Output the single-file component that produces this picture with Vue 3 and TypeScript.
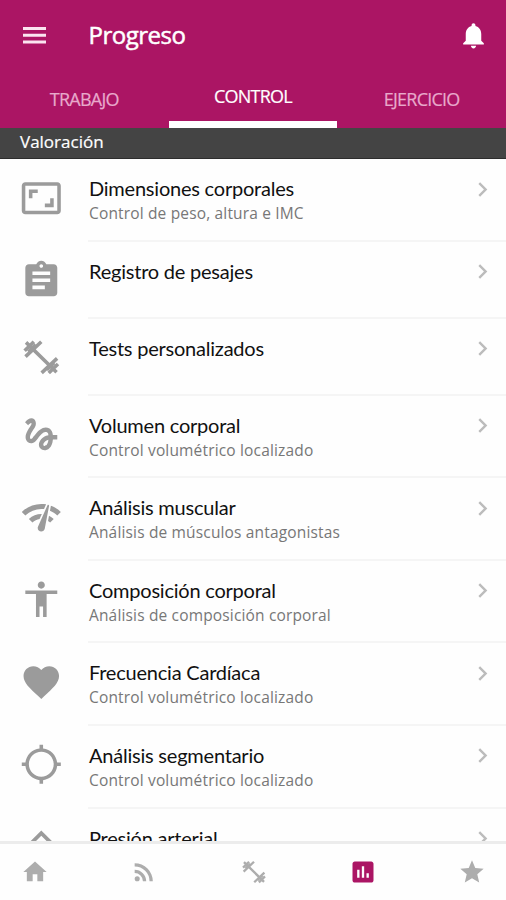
<script setup lang="ts">
interface Row {
  title: string
  sub?: string
  icon: string
}

const paths: Record<string, string> = {
  ratio: 'M19 12h-2v3h-3v2h5v-5zM7 9h3V7H5v5h2V9zm14-6H3c-1.1 0-2 .9-2 2v14c0 1.1.9 2 2 2h18c1.1 0 2-.9 2-2V5c0-1.1-.9-2-2-2zm0 16.01H3V4.99h18v14.02z',
  clipboard: 'M19 3h-4.18C14.4 1.84 13.3 1 12 1c-1.3 0-2.4.84-2.82 2H5c-1.1 0-2 .9-2 2v14c0 1.1.9 2 2 2h14c1.1 0 2-.9 2-2V5c0-1.1-.9-2-2-2zm-7 0c.55 0 1 .45 1 1s-.45 1-1 1-1-.45-1-1 .45-1 1-1zm2 14H7v-2h7v2zm3-4H7v-2h10v2zm0-4H7V7h10v2z',
  gesture: 'M4.59 6.89c.7-.71 1.4-1.35 1.71-1.22.5.2 0 1.03-.3 1.52-.25.42-2.86 3.89-2.86 6.31 0 1.28.48 2.34 1.34 2.98.75.56 1.74.73 2.64.46 1.07-.31 1.95-1.4 3.06-2.77 1.21-1.49 2.83-3.44 4.08-3.44 1.63 0 1.65 1.01 1.76 1.79-3.78.64-5.38 3.67-5.38 5.37 0 1.7 1.44 3.09 3.21 3.09 1.63 0 4.29-1.33 4.69-6.1H21v-2.5h-2.47c-.15-1.65-1.09-4.2-4.03-4.2-2.25 0-4.18 1.91-4.94 2.84-.58.73-2.06 2.48-2.29 2.72-.25.3-.68.84-1.11.84-.45 0-.72-.83-.36-1.92.35-1.09 1.4-2.86 1.85-3.52.78-1.14 1.3-1.92 1.3-3.28C8.95 3.69 7.31 3 6.44 3 5.12 3 3.97 4 3.72 4.25c-.36.36-.66.66-.88.93l1.75 1.71zm9.29 11.66c-.31 0-.74-.26-.74-.72 0-.6.73-2.2 2.87-2.76-.3 2.69-1.43 3.48-2.13 3.48z',
  gauge: 'M15.9 5c-.17 0-.32.09-.41.23l-.07.15-5.18 11.65c-.16.29-.26.61-.26.96 0 1.11.9 2.01 2.01 2.01.96 0 1.77-.68 1.96-1.59l.01-.03L16.4 5.5c0-.28-.22-.5-.5-.5zM1 9l2 2c2.88-2.88 6.79-4.08 10.53-3.62l1.19-2.68C9.89 3.84 4.74 5.27 1 9zm20 2l2-2c-1.64-1.64-3.55-2.82-5.59-3.57l-.53 2.82c1.5.62 2.9 1.53 4.12 2.75zm-4 4l2-2c-.8-.8-1.7-1.42-2.66-1.89l-.55 2.92c.42.27.83.59 1.21.97zM5 13l2 2c1.13-1.13 2.56-1.79 4.03-2l1.28-2.88c-2.63-.08-5.3.87-7.31 2.88z',
  person: 'M12 2c1.1 0 2 .9 2 2s-.9 2-2 2-2-.9-2-2 .9-2 2-2zm9 7h-6v13h-2v-6h-2v6H9V9H3V7h18v2z',
  heart: 'M12 21.35l-1.45-1.32C5.4 15.36 2 12.28 2 8.5 2 5.42 4.42 3 7.5 3c1.74 0 3.41.81 4.5 2.09C13.09 3.81 14.76 3 16.5 3 19.58 3 22 5.42 22 8.5c0 3.78-3.4 6.86-8.55 11.54L12 21.35z',
  target: 'M20.94 11c-.46-4.17-3.77-7.48-7.94-7.94V1h-2v2.06C6.83 3.52 3.52 6.83 3.06 11H1v2h2.06c.46 4.17 3.77 7.48 7.94 7.94V23h2v-2.06c4.17-.46 7.48-3.77 7.94-7.94H23v-2h-2.06zM12 19c-3.87 0-7-3.13-7-7s3.13-7 7-7 7 3.13 7 7-3.13 7-7 7z',
  up: 'M12 2.5l-6.6 6.6 1.5 1.5L12 5.5l5.1 5.1 1.5-1.5z',
  home: 'M10 20v-6h4v6h5v-8h3L12 3 2 12h3v8z',
  feed: 'M6.18 15.64a2.18 2.18 0 1 1 0 4.36 2.18 2.18 0 0 1 0-4.36zM4 4.44A15.56 15.56 0 0 1 19.56 20h-2.83A12.73 12.73 0 0 0 4 7.27V4.44zm0 5.66a9.9 9.9 0 0 1 9.9 9.9h-2.83A7.07 7.07 0 0 0 4 12.93V10.1z',
  chart: 'M19 3H5c-1.1 0-2 .9-2 2v14c0 1.1.9 2 2 2h14c1.1 0 2-.9 2-2V5c0-1.1-.9-2-2-2zM9 17H7v-7h2v7zm4 0h-2V7h2v10zm4 0h-2v-4h2v4z',
  star: 'M12 17.27L18.18 21l-1.64-7.03L22 9.24l-7.19-.61L12 2 9.19 8.63 2 9.24l5.46 4.73L5.82 21z',
  dumbbell: 'M3.4 3.6L20.6 20.4M3.1 11.6L12 3.2M2.6 8.3L7.8 3.2M4.8 9L9 5M20.9 12.6L12.2 20.8M21.4 15.8L16.2 20.9M19.2 15L15 19',
}

const rows: Row[] = [
  { title: 'Dimensiones corporales', sub: 'Control de peso, altura e IMC', icon: 'ratio' },
  { title: 'Registro de pesajes', icon: 'clipboard' },
  { title: 'Tests personalizados', icon: 'dumbbell' },
  { title: 'Volumen corporal', sub: 'Control volumétrico localizado', icon: 'gesture' },
  { title: 'Análisis muscular', sub: 'Análisis de músculos antagonistas', icon: 'gauge' },
  { title: 'Composición corporal', sub: 'Análisis de composición corporal', icon: 'person' },
  { title: 'Frecuencia Cardíaca', sub: 'Control volumétrico localizado', icon: 'heart' },
  { title: 'Análisis segmentario', sub: 'Control volumétrico localizado', icon: 'target' },
  { title: 'Presión arterial', icon: 'up' },
]

const tabs = ['TRABAJO', 'CONTROL', 'EJERCICIO']
const nav = ['home', 'feed', 'dumbbell', 'chart', 'star']
</script>

<template>
  <div class="screen">
    <header class="header">
      <div class="bar">
        <svg class="menu" viewBox="0 0 23 17"><path d="M0 0h23v3H0zM0 6.7h23v3H0zM0 13.4h23v3H0z" /></svg>
        <h1>Progreso</h1>
        <svg class="bell" viewBox="0 0 24 24">
          <path d="M12 22c1.1 0 2-.9 2-2h-4c0 1.1.9 2 2 2zm6-6v-5c0-3.07-1.63-5.64-4.5-6.32V4c0-.83-.67-1.5-1.5-1.5s-1.5.67-1.5 1.5v.68C7.64 5.36 6 7.92 6 11v5l-2 2v1h16v-1l-2-2z" />
        </svg>
      </div>
      <nav class="tabs">
        <div v-for="t in tabs" :key="t" class="tab" :class="{ active: t === 'CONTROL' }">{{ t }}</div>
      </nav>
    </header>
    <div class="section">Valoración</div>
    <main class="list">
      <div v-for="r in rows" :key="r.title" class="row" :class="{ short: !r.sub }">
        <svg class="icon" :class="{ stroked: r.icon === 'dumbbell' }" viewBox="0 0 24 24"><path :d="paths[r.icon]" /></svg>
        <div class="body">
          <div class="text">
            <div class="title">{{ r.title }}</div>
            <div v-if="r.sub" class="sub">{{ r.sub }}</div>
          </div>
          <svg class="chev" viewBox="0 0 24 24"><path d="M10 6L8.59 7.41 13.17 12l-4.58 4.59L10 18l6-6z" /></svg>
        </div>
      </div>
    </main>
    <footer class="bottom">
      <svg v-for="n in nav" :key="n" viewBox="0 0 24 24" :class="{ on: n === 'chart', stroked: n === 'dumbbell' }">
        <path :d="paths[n]" />
      </svg>
    </footer>
  </div>
</template>

<style>
body {
  margin: 0;
  background: #fff;
}
</style>

<style scoped>
.screen {
  width: 506px;
  height: 900px;
  display: flex;
  flex-direction: column;
  overflow: hidden;
  background: #fefefe;
  font-family: 'Open Sans', sans-serif;
}
svg {
  display: block;
  flex: none;
  fill: currentColor;
}
.stroked {
  fill: none;
  stroke: currentColor;
  stroke-width: 2;
}
.header {
  height: 128px;
  flex: none;
  background: #ab1564;
  color: #fff;
}
.bar {
  height: 70px;
  display: flex;
  align-items: center;
  padding: 0 17px 0 23px;
}
.menu {
  width: 23px;
  height: 17px;
  color: #fbe4f0;
}
h1 {
  margin: 0 0 0 42.5px;
  flex: 1;
  font: 400 24px/32px 'Open Sans', sans-serif;
  letter-spacing: -0.5px;
  -webkit-text-stroke: 0.5px #fff;
}
.bell {
  width: 31px;
  height: 31px;
}
.tabs {
  height: 58px;
  display: grid;
  grid-template-columns: repeat(3, 1fr);
}
.tab {
  box-sizing: border-box;
  padding-top: 17px;
  text-align: center;
  font-size: 18px;
  line-height: 24px;
  letter-spacing: -0.75px;
  color: #e8a9cb;
  -webkit-text-stroke: 0.2px;
}
.tab.active {
  padding-top: 14px;
  color: #fff;
  border-bottom: 7px solid #fff;
}
.section {
  box-sizing: border-box;
  height: 31px;
  flex: none;
  padding-left: 20px;
  background: #444;
  border-bottom: 1px solid #2d2d2d;
  color: #fff;
  font-size: 17px;
  line-height: 28px;
  -webkit-text-stroke: 0.2px;
}
.list {
  flex: 1;
  min-height: 0;
  overflow: hidden;
}
.row {
  height: 82.6px;
  display: flex;
  padding-left: 20px;
}
.row.short {
  height: 77px;
}
.icon {
  width: 42.6px;
  height: 42.6px;
  margin: 17.5px 25.4px 0 0;
  color: #9b9b9b;
}
.body {
  box-sizing: border-box;
  flex: 1;
  display: flex;
  justify-content: space-between;
  border-bottom: 2px solid #f5f5f5;
  padding-right: 9.5px;
}
.text {
  padding: 17px 0 0 1px;
}
.title {
  font: 400 20px/25px Lato, sans-serif;
  letter-spacing: -0.22px;
  color: #111;
  white-space: nowrap;
}
.sub {
  font-size: 15.5px;
  line-height: 24px;
  letter-spacing: 0.16px;
  color: #777;
  white-space: nowrap;
}
.chev {
  width: 29px;
  height: 29px;
  margin-top: 15.5px;
  color: #bcbcbc;
}
.bottom {
  box-sizing: border-box;
  height: 59px;
  flex: none;
  display: flex;
  justify-content: space-between;
  padding: 14px 20px 0 21px;
  border-top: 3px solid #ececec;
  background: #fefefe;
  color: #adadad;
}
.bottom svg {
  width: 28px;
  height: 28px;
}
.bottom .on {
  color: #ab1564;
}
</style>
